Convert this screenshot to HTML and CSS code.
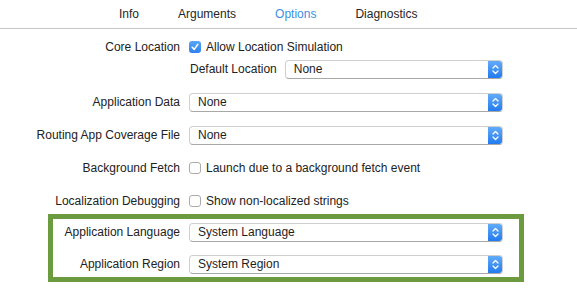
FILE: index.html
```html
<!DOCTYPE html>
<html>
<head>
<meta charset="utf-8">
<link rel="stylesheet" href="styles.css">
</head>
<body>
<nav class="tabs">
  <span class="tab">Info</span>
  <span class="tab">Arguments</span>
  <span class="tab active">Options</span>
  <span class="tab">Diagnostics</span>
</nav>
<main class="form">
  <div class="group">
    <div class="row">
      <label class="label">Core Location</label>
      <div class="control"><span class="check checked"><svg width="12" height="12" viewBox="0 0 12 12"><path d="M3.2 6.3 L5.2 8.4 L8.8 3.4" fill="none" stroke="#fff" stroke-width="1.6" stroke-linecap="round" stroke-linejoin="round"/></svg></span><span>Allow Location Simulation</span></div>
    </div>
    <div class="row">
      <span class="label"></span>
      <div class="control sub">
        <span class="sublabel">Default Location</span>
        <div class="select grow"><span class="value">None</span><span class="stepper"><svg width="15" height="19" viewBox="0 0 15 19"><path d="M5 8 L7.5 5.5 L10 8 M5 11 L7.5 13.5 L10 11" fill="none" stroke="#fff" stroke-width="1.3" stroke-linecap="round" stroke-linejoin="round"/></svg></span></div>
      </div>
    </div>
  </div>
  <div class="row">
    <label class="label">Application Data</label>
    <div class="control"><div class="select grow"><span class="value">None</span><span class="stepper"><svg width="15" height="19" viewBox="0 0 15 19"><path d="M5 8 L7.5 5.5 L10 8 M5 11 L7.5 13.5 L10 11" fill="none" stroke="#fff" stroke-width="1.3" stroke-linecap="round" stroke-linejoin="round"/></svg></span></div></div>
  </div>
  <div class="row">
    <label class="label">Routing App Coverage File</label>
    <div class="control"><div class="select grow"><span class="value">None</span><span class="stepper"><svg width="15" height="19" viewBox="0 0 15 19"><path d="M5 8 L7.5 5.5 L10 8 M5 11 L7.5 13.5 L10 11" fill="none" stroke="#fff" stroke-width="1.3" stroke-linecap="round" stroke-linejoin="round"/></svg></span></div></div>
  </div>
  <div class="row">
    <label class="label">Background Fetch</label>
    <div class="control"><span class="check"></span><span>Launch due to a background fetch event</span></div>
  </div>
  <div class="row">
    <label class="label">Localization Debugging</label>
    <div class="control"><span class="check"></span><span>Show non-localized strings</span></div>
  </div>
</main>
<section class="highlight">
  <div class="row">
    <label class="label">Application Language</label>
    <div class="control"><div class="select grow"><span class="value">System Language</span><span class="stepper"><svg width="15" height="19" viewBox="0 0 15 19"><path d="M5 8 L7.5 5.5 L10 8 M5 11 L7.5 13.5 L10 11" fill="none" stroke="#fff" stroke-width="1.3" stroke-linecap="round" stroke-linejoin="round"/></svg></span></div></div>
  </div>
  <div class="row">
    <label class="label">Application Region</label>
    <div class="control"><div class="select grow"><span class="value">System Region</span><span class="stepper"><svg width="15" height="19" viewBox="0 0 15 19"><path d="M5 8 L7.5 5.5 L10 8 M5 11 L7.5 13.5 L10 11" fill="none" stroke="#fff" stroke-width="1.3" stroke-linecap="round" stroke-linejoin="round"/></svg></span></div></div>
  </div>
</section>
</body>
</html>
```
FILE: styles.css
```css
* { box-sizing: border-box; }
html, body {
  margin: 0;
  padding: 0;
  background: #ffffff;
  width: 577px;
  height: 290px;
  overflow: hidden;
}
body {
  font-family: "Liberation Sans", Arial, sans-serif;
  font-size: 12px;
  color: #222222;
}
.tabs {
  display: flex;
  align-items: center;
  gap: 39px;
  height: 29px;
  padding-left: 119px;
  border-bottom: 1px solid #c6c6c6;
}
.tab {
  color: #262626;
  font-size: 12px;
  line-height: 28px;
}
.tab.active { color: #3d8fe3; }

.form {
  display: flex;
  flex-direction: column;
  gap: 13px;
  padding-top: 8px;
}
.group {
  display: flex;
  flex-direction: column;
  gap: 2px;
}
.row {
  display: flex;
  align-items: center;
  gap: 9px;
  height: 20px;
}
.label {
  width: 180px;
  text-align: right;
  flex: none;
  white-space: nowrap;
}
.control {
  display: flex;
  align-items: center;
  gap: 5px;
  width: 314px;
  white-space: nowrap;
}
.control.sub { gap: 8px; padding-left: 1px; }
.sublabel { flex: none; }

.check {
  width: 12px;
  height: 12px;
  flex: none;
  border: 1px solid #acacac;
  border-radius: 3px;
  background: #ffffff;
  display: flex;
  align-items: center;
  justify-content: center;
}
.check.checked {
  border: none;
  background: linear-gradient(#5aa6f7, #2d80ee);
}
.check svg { display: block; }

.select {
  height: 19px;
  display: flex;
  align-items: stretch;
  border: 1px solid #cfcfcf;
  border-bottom-color: #a8a8a8;
  border-radius: 4px;
  background: #ffffff;
  overflow: hidden;
}
.select.grow { flex: 1; }
.value {
  flex: 1;
  padding-left: 8px;
  line-height: 17px;
  color: #1e1e1e;
}
.stepper {
  width: 15px;
  margin: -1px -1px -1px 0;
  background: linear-gradient(#66aefa, #1f78ee);
  border-radius: 0 4px 4px 0;
  display: flex;
  align-items: center;
  justify-content: center;
}
.stepper svg { display: block; }

.highlight {
  margin: 3px 0 0 48px;
  width: 476px;
  border: 5px solid #6b9a3f;
  padding: 3px 0 3px 0;
  display: flex;
  flex-direction: column;
  gap: 12px;
}
.highlight .label { width: 127px; }
.highlight .control { width: 314px; }
```
